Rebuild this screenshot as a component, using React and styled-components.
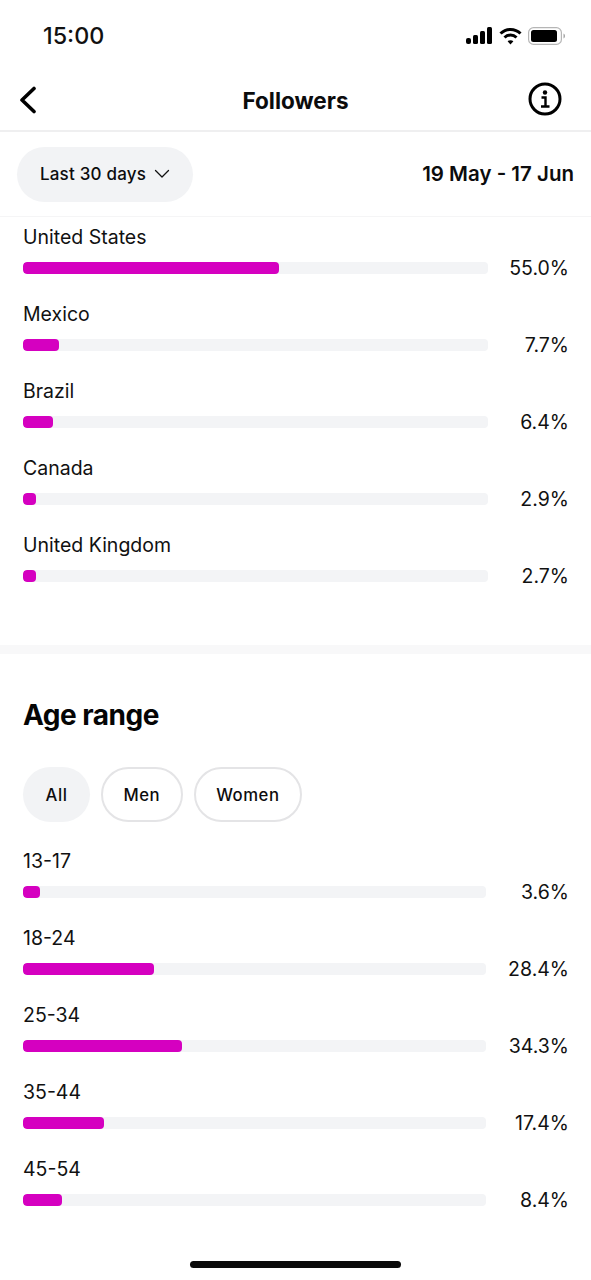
import React from "react"
import styled, { createGlobalStyle } from "styled-components"

const GlobalStyle = createGlobalStyle`
  html, body {
    margin: 0;
    padding: 0;
    background: #fff;
  }
  * {
    box-sizing: border-box;
  }
`

const Page = styled.div`
  width: 591px;
  height: 1280px;
  overflow: hidden;
  position: relative;
  background: #fff;
  color: #0c0c0d;
  font-family: Inter, "Liberation Sans", sans-serif;
`

const StatusBar = styled.div`
  height: 70px;
  padding: 1px 25px 0 43px;
  display: flex;
  justify-content: space-between;
  align-items: center;
`

const Clock = styled.div`
  font-size: 23.3px;
  font-weight: 500;
  color: #111;
`

const StatusIcons = styled.div`
  display: flex;
  align-items: center;
  gap: 6px;
`

const NavBar = styled.div`
  height: 62px;
  padding: 0 29px 2px 19px;
  display: flex;
  justify-content: space-between;
  align-items: center;
  border-bottom: 2px solid #efeff0;
  position: relative;
`

const NavTitle = styled.div`
  position: absolute;
  left: 0;
  right: 0;
  top: 17px;
  text-align: center;
  font-size: 22.5px;
  line-height: 28px;
  font-weight: 700;
`

const FilterRow = styled.div`
  height: 85px;
  padding: 0 17px;
  display: flex;
  justify-content: space-between;
  align-items: center;
  border-bottom: 1px solid #f5f5f6;
`

const RangeButton = styled.div`
  width: 176px;
  height: 55px;
  border-radius: 28px;
  background: #f2f3f5;
  display: flex;
  align-items: center;
  justify-content: center;
  gap: 8px;
  font-size: 17px;
  font-weight: 500;
  letter-spacing: 0.2px;
`

const DateRange = styled.div`
  font-size: 20.5px;
  line-height: 24px;
  font-weight: 600;
`

const RowList = styled.div`
  padding: ${(p) => p.$top}px 23px 0;
`

const Row = styled.div`
  height: 77px;
`

const RowLabel = styled.div`
  font-size: 19.5px;
  line-height: 28px;
  height: 28px;
  color: #111;
`

const RowBody = styled.div`
  display: flex;
  align-items: center;
  height: 26px;
  margin-top: 4px;
`

const Track = styled.div`
  width: ${(p) => p.$width}px;
  height: 12px;
  border-radius: 4px;
  background: #f3f4f6;
  overflow: hidden;
`

const Fill = styled.div`
  height: 100%;
  border-radius: 4px;
  background: #d500c0;
`

const Percent = styled.div`
  flex: 1;
  text-align: right;
  font-size: 19.5px;
  color: #111;
  margin-right: -1px;
`

const Divider = styled.div`
  height: 9px;
  margin-top: 37px;
  background: #f8f8f9;
`

const SectionTitle = styled.h2`
  margin: 43px 0 0;
  padding: 0 23px;
  font-size: 28px;
  line-height: 36px;
  font-weight: 700;
  letter-spacing: -0.5px;
  color: #050505;
`

const PillRow = styled.div`
  display: flex;
  gap: 11px;
  padding: 34px 23px 0;
`

const Pill = styled.div`
  height: 55px;
  padding: 0 ${(p) => (p.$active ? 22.5 : 20.5)}px;
  border-radius: 28px;
  display: flex;
  align-items: center;
  font-size: 16.7px;
  font-weight: 550;
  letter-spacing: 0.55px;
  background: ${(p) => (p.$active ? "#f2f3f5" : "#fff")};
  border: ${(p) => (p.$active ? "none" : "2px solid #e4e4e6")};
`

const HomeBar = styled.div`
  position: absolute;
  left: 190px;
  bottom: 12px;
  width: 211px;
  height: 7px;
  border-radius: 4px;
  background: #0a0a0a;
`

const countries = [
  ["United States", 55.0],
  ["Mexico", 7.7],
  ["Brazil", 6.4],
  ["Canada", 2.9],
  ["United Kingdom", 2.7],
]

const ages = [
  ["13-17", 3.6],
  ["18-24", 28.4],
  ["25-34", 34.3],
  ["35-44", 17.4],
  ["45-54", 8.4],
]

const Bars = ({ items, top, width }) => (
  <RowList $top={top}>
    {items.map(([label, value]) => (
      <Row key={label}>
        <RowLabel>{label}</RowLabel>
        <RowBody>
          <Track $width={width}>
            <Fill style={{ width: `${value}%` }} />
          </Track>
          <Percent>{value.toFixed(1)}%</Percent>
        </RowBody>
      </Row>
    ))}
  </RowList>
)

const SignalIcon = () => (
  <svg width="27" height="18" viewBox="0 0 27 18" fill="#000">
    <rect x="0" y="11" width="5" height="6" rx="2" />
    <rect x="7" y="8" width="5" height="9" rx="1.5" />
    <rect x="14" y="4" width="5" height="13" rx="1.5" />
    <rect x="21" y="0" width="5" height="17" rx="1.5" />
  </svg>
)

const WifiIcon = () => (
  <svg width="23" height="18" viewBox="0 0 23 18" fill="none" stroke="#000" strokeWidth="3">
    <path d="M1.5 6.5C7 1 16 1 21.5 6.5" />
    <path d="M5.5 10.5C8.8 7.3 14.2 7.3 17.5 10.5" />
    <path d="M11.5 17.5L8.6 14.2C10.2 12.8 12.8 12.8 14.4 14.2Z" fill="#000" stroke="none" />
  </svg>
)

const BatteryIcon = () => (
  <svg width="38" height="18" viewBox="0 0 38 18" fill="none">
    <rect x="0.6" y="0.6" width="32.8" height="16.8" rx="5" stroke="#b5b5b5" strokeWidth="1.2" />
    <rect x="3" y="3" width="26" height="12" rx="2.5" fill="#000" />
    <path d="M35.5 6.5C36.6 7 37 8 37 9s-.4 2-1.5 2.5Z" fill="#a5a5a5" />
  </svg>
)

const BackIcon = () => (
  <svg width="18" height="30" viewBox="0 0 18 30" fill="none" stroke="#000" strokeWidth="3.6" strokeLinecap="round" strokeLinejoin="round">
    <path d="M15 4.5L3 16l12 11.5" />
  </svg>
)

const InfoIcon = () => (
  <svg width="34" height="34" viewBox="0 0 34 34" fill="none">
    <circle cx="17" cy="17" r="15" stroke="#000" strokeWidth="3" />
    <circle cx="17" cy="10.5" r="2.2" fill="#000" />
    <path d="M13.5 15.5h4v8.5M13 24.5h8.5" stroke="#000" strokeWidth="2.4" />
  </svg>
)

const ChevronIcon = () => (
  <svg width="16" height="10" viewBox="0 0 16 10" fill="none" stroke="#111" strokeWidth="1.3" strokeLinecap="round" strokeLinejoin="round">
    <path d="M1.5 1.5L8 8l6.5-6.5" />
  </svg>
)

const App = () => {
  return (
    <Page>
      <GlobalStyle />
      <StatusBar>
        <Clock>15:00</Clock>
        <StatusIcons>
          <SignalIcon />
          <WifiIcon />
          <BatteryIcon />
        </StatusIcons>
      </StatusBar>
      <NavBar>
        <BackIcon />
        <NavTitle>Followers</NavTitle>
        <InfoIcon />
      </NavBar>
      <FilterRow>
        <RangeButton>
          Last 30 days <ChevronIcon />
        </RangeButton>
        <DateRange>19 May - 17 Jun</DateRange>
      </FilterRow>
      <Bars items={countries} top={6} width={465} />
      <Divider />
      <SectionTitle>Age range</SectionTitle>
      <PillRow>
        <Pill $active>All</Pill>
        <Pill>Men</Pill>
        <Pill>Women</Pill>
      </PillRow>
      <Bars items={ages} top={25} width={463} />
      <HomeBar />
    </Page>
  )
}

export default App
